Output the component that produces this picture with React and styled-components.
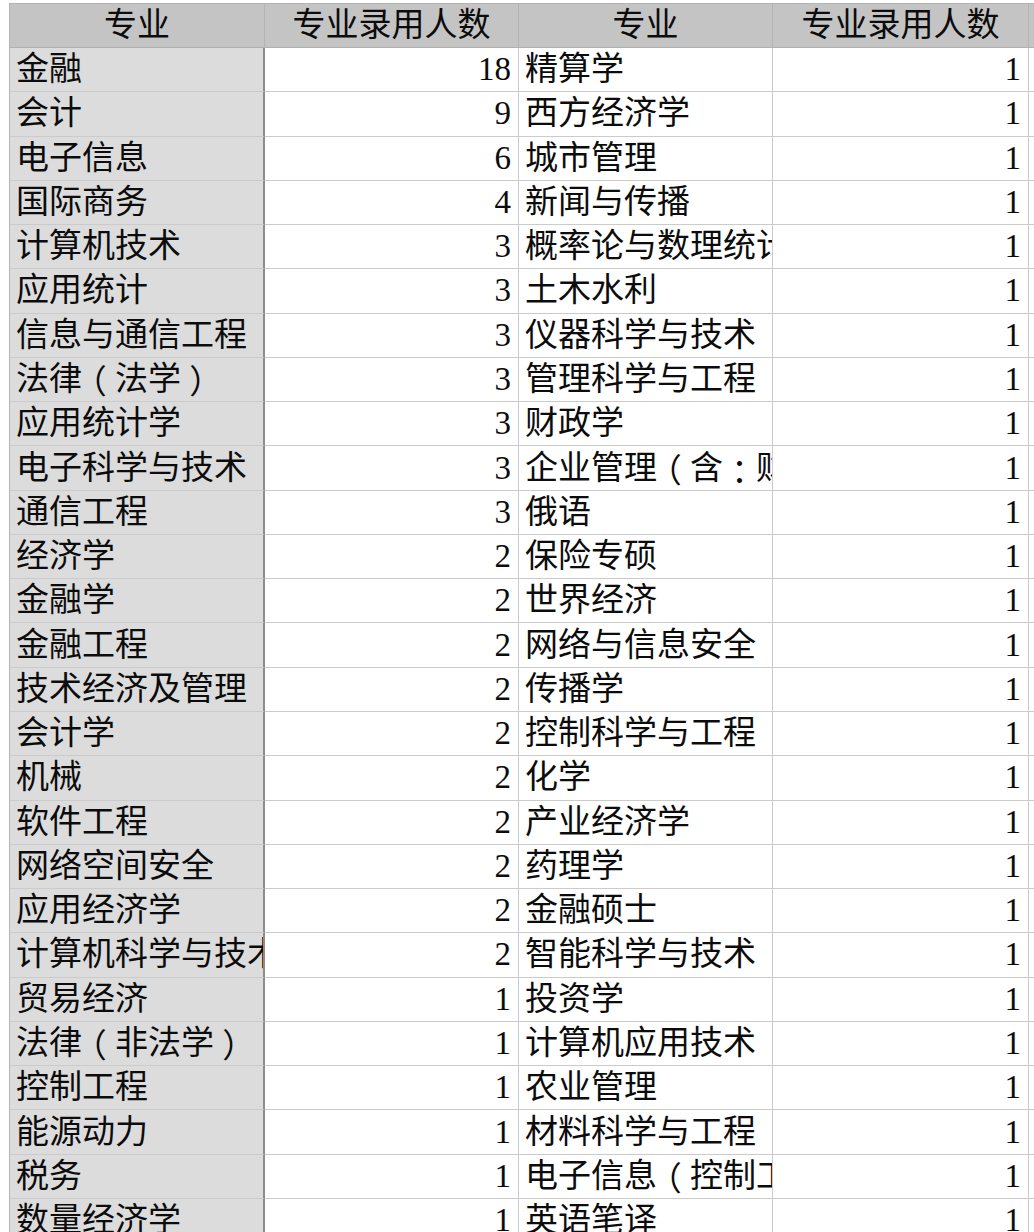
import React from "react";
import styled, { createGlobalStyle } from "styled-components";

const GlobalStyle = createGlobalStyle`
	html, body {
		margin: 0;
		padding: 0;
		background: #ffffff;
		overflow: hidden;
	}
`;

const Page = styled.div`
	width: 1034px;
	height: 1232px;
	overflow: hidden;
	padding: 3px 0 0 9px;
	box-sizing: border-box;
	font-family: "Liberation Serif", "Noto Sans CJK SC", serif;
	font-size: 33px;
	color: #0c0c0c;
`;

const Sheet = styled.div`
	display: grid;
	grid-template-columns: 255px 254px 254px 256px 120px;
	grid-template-rows: 44px;
	grid-auto-rows: 44.27px;
	border-top: 1px solid #b4b4b4;
	border-left: 1px solid #b4b4b4;
	width: max-content;
`;

const Cell = styled.div`
	box-sizing: border-box;
	display: flex;
	align-items: center;
	justify-content: ${({ $align }) =>
		$align === "right" ? "flex-end" : $align === "center" ? "center" : "flex-start"};
	padding: 0 ${({ $align }) => ($align === "right" ? "7px" : "6px")} 0 6px;
	background: ${({ $bg }) => $bg || "#ffffff"};
	border-right: ${({ $thick }) => ($thick ? "2px solid #8c8c8c" : "1px solid #cbcbcb")};
	border-bottom: 1px solid #cbcbcb;
	white-space: nowrap;
	overflow: hidden;
	line-height: 1;
`;

const HeadCell = styled(Cell)`
	background: #c4c4c4;
	border-bottom: 1px solid #b0b0b0;
	border-right: ${({ $thick }) => ($thick ? "2px solid #a8a8a8" : "1px solid #b4b4b4")};
`;

/* full-width punctuation centred in its em box, as the sheet renders it */
const Punct = styled.span`
	font-family: "Noto Sans CJK SC", sans-serif;
	font-feature-settings: "halt" 1;
	margin: 0 0.25em;
`;

const left = [
	["金融", 18], ["会计", 9], ["电子信息", 6], ["国际商务", 4], ["计算机技术", 3],
	["应用统计", 3], ["信息与通信工程", 3], ["法律（法学）", 3], ["应用统计学", 3],
	["电子科学与技术", 3], ["通信工程", 3], ["经济学", 2], ["金融学", 2], ["金融工程", 2],
	["技术经济及管理", 2], ["会计学", 2], ["机械", 2], ["软件工程", 2], ["网络空间安全", 2],
	["应用经济学", 2], ["计算机科学与技术", 2], ["贸易经济", 1], ["法律（非法学）", 1],
	["控制工程", 1], ["能源动力", 1], ["税务", 1], ["数量经济学", 1],
];

const right = [
	"精算学", "西方经济学", "城市管理", "新闻与传播", "概率论与数理统计", "土木水利",
	"仪器科学与技术", "管理科学与工程", "财政学", "企业管理（含：财务管理）", "俄语",
	"保险专硕", "世界经济", "网络与信息安全", "传播学", "控制科学与工程", "化学",
	"产业经济学", "药理学", "金融硕士", "智能科学与技术", "投资学", "计算机应用技术",
	"农业管理", "材料科学与工程", "电子信息（控制工程）", "英语笔译",
];

const renderName = (text) =>
	text.split(/([（）：])/).map((part, i) =>
		/[（）：]/.test(part) ? <Punct key={i}>{part}</Punct> : part
	);

const App = () => {
	return (
		<Page>
			<GlobalStyle />
			<Sheet>
				<HeadCell $align="center">专业</HeadCell>
				<HeadCell $align="center">专业录用人数</HeadCell>
				<HeadCell $align="center">专业</HeadCell>
				<HeadCell $align="center">专业录用人数</HeadCell>
				<HeadCell />
				{left.map(([name, count], i) => (
					<React.Fragment key={name}>
						<Cell $bg="#dcdcdc" $thick>{renderName(name)}</Cell>
						<Cell $align="right">{count}</Cell>
						<Cell>{renderName(right[i])}</Cell>
						<Cell $align="right">1</Cell>
						<Cell />
					</React.Fragment>
				))}
			</Sheet>
		</Page>
	);
};

export default App;
